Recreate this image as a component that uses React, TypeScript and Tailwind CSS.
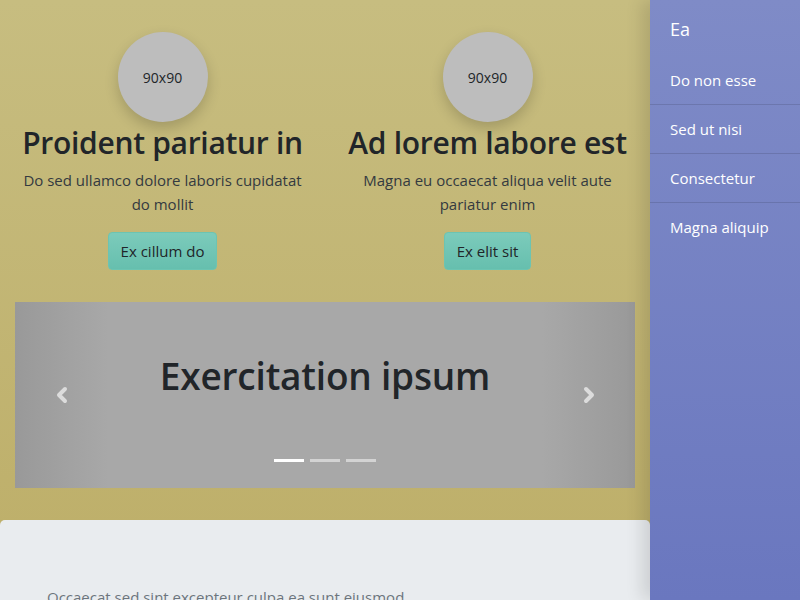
import { ChevronLeft, ChevronRight } from "lucide-react";

const features = [
  {
    title: "Proident pariatur in",
    text: "Do sed ullamco dolore laboris cupidatat do mollit",
    cta: "Ex cillum do",
  },
  {
    title: "Ad lorem labore est",
    text: "Magna eu occaecat aliqua velit aute pariatur enim",
    cta: "Ex elit sit",
  },
];

const links = ["Do non esse", "Sed ut nisi", "Consectetur", "Magna aliquip"];

export default function App() {
  return (
    <div className="flex h-[600px] w-[800px] overflow-hidden font-['Open_Sans',sans-serif] text-[#212529]">
      <main className="flex w-[650px] shrink-0 flex-col bg-gradient-to-b from-[#c7bd80] to-[#bdae68]">
        <section className="grid grid-cols-2 pt-8 pb-8">
          {features.map((f) => (
            <div key={f.title} className="flex flex-col items-center px-[15px] text-center">
              <div className="flex h-[90px] w-[90px] items-center justify-center rounded-full bg-[#bdbdbd] text-[14px] shadow-[0_6px_14px_rgba(0,0,0,0.18)]">
                90x90
              </div>
              <h3 className="mt-[4px] mb-2 text-[30px] leading-[34px] font-semibold tracking-[-0.3px]">{f.title}</h3>
              <p className="mb-4 text-[15px] leading-6 text-[#343a40]">{f.text}</p>
              <button className="h-[38px] rounded-[4px] border border-[#6cc4b2] bg-gradient-to-b from-[#7ccbbb] to-[#66bfae] px-3 text-[15px] leading-6">
                {f.cta}
              </button>
            </div>
          ))}
        </section>

        <div className="px-[15px]">
          <div className="relative h-[186px] bg-[#a8a8a8]">
            <div className="absolute inset-y-0 left-0 flex w-[15%] items-center justify-center bg-gradient-to-r from-[#999999] to-transparent">
              <ChevronLeft className="h-6 w-6 text-[#dcdcdc]" strokeWidth={4} />
            </div>
            <div className="absolute inset-y-0 right-0 flex w-[15%] items-center justify-center bg-gradient-to-l from-[#999999] to-transparent">
              <ChevronRight className="h-6 w-6 text-[#dcdcdc]" strokeWidth={4} />
            </div>
            <h2 className="pt-[50px] text-center text-[37px] leading-[48px] font-semibold tracking-[-0.2px]">Exercitation ipsum</h2>
            <div className="absolute bottom-[26px] left-0 right-0 flex justify-center gap-[6px]">
              <span className="h-[3px] w-[30px] bg-white" />
              <span className="h-[3px] w-[30px] bg-[#d3d3d3]" />
              <span className="h-[3px] w-[30px] bg-[#d3d3d3]" />
            </div>
          </div>
        </div>

        <div className="mt-8 flex-1 rounded-t-[5px] bg-[#e9ecef] px-[47px] pt-[66px]">
          <p className="text-[15px] text-[#6c757d]">Occaecat sed sint excepteur culpa ea sunt eiusmod</p>
        </div>
      </main>

      <aside className="relative z-10 w-[150px] shrink-0 bg-gradient-to-b from-[#7f8bc7] to-[#6a77bf] text-white shadow-[-8px_0_16px_rgba(0,0,0,0.12)]">
        <div className="flex h-[56px] items-center px-5 pt-[2px] text-[18px]">Ea</div>
        {links.map((l, i) => (
          <div
            key={l}
            className={
              i < links.length - 1
                ? "flex h-[49px] items-center border-b border-[rgba(0,0,0,0.12)] px-5 text-[15px]"
                : "flex h-[49px] items-center px-5 text-[15px]"
            }
          >
            {l}
          </div>
        ))}
      </aside>
    </div>
  );
}
